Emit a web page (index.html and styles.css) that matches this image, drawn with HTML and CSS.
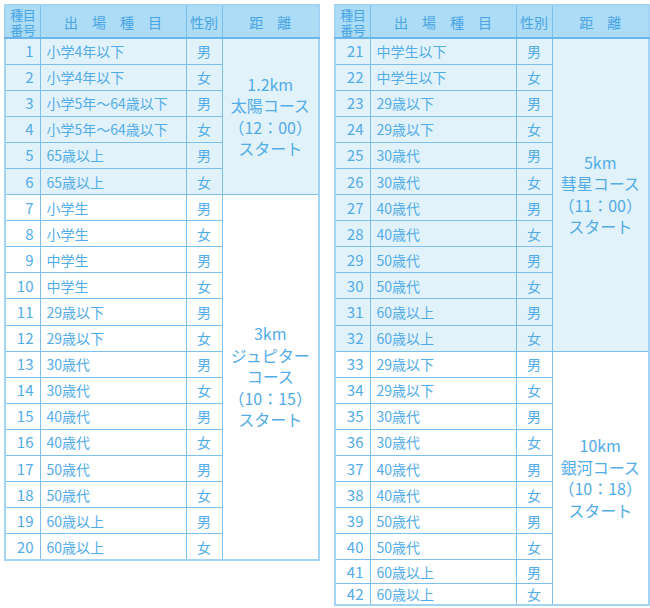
FILE: index.html
```html
<!DOCTYPE html>
<html lang="ja">
<head>
<meta charset="utf-8">
<link rel="stylesheet" href="styles.css">
</head>
<body>
<div class="wrap">
  <table class="tbl">
    <colgroup><col class="c-no"><col class="c-ev"><col class="c-sx"><col class="c-ds"></colgroup>
    <thead>
      <tr class="head"><th class="h-no">種目<br>番号</th><th>出　場　種　目</th><th>性別</th><th>距　離</th></tr>
    </thead>
    <tbody>
      <tr class="tint"><td class="no">1</td><td class="ev">小学4年以下</td><td class="sx">男</td><td class="ds" rowspan="6">1.2km<br>太陽コース<br>（12：00）<br>スタート</td></tr>
      <tr class="tint"><td class="no">2</td><td class="ev">小学4年以下</td><td class="sx">女</td></tr>
      <tr class="tint"><td class="no">3</td><td class="ev">小学5年～64歳以下</td><td class="sx">男</td></tr>
      <tr class="tint"><td class="no">4</td><td class="ev">小学5年～64歳以下</td><td class="sx">女</td></tr>
      <tr class="tint"><td class="no">5</td><td class="ev">65歳以上</td><td class="sx">男</td></tr>
      <tr class="tint"><td class="no">6</td><td class="ev">65歳以上</td><td class="sx">女</td></tr>
      <tr><td class="no">7</td><td class="ev">小学生</td><td class="sx">男</td><td class="ds" rowspan="14">3km<br>ジュピター<br>コース<br>（10：15）<br>スタート</td></tr>
      <tr><td class="no">8</td><td class="ev">小学生</td><td class="sx">女</td></tr>
      <tr><td class="no">9</td><td class="ev">中学生</td><td class="sx">男</td></tr>
      <tr><td class="no">10</td><td class="ev">中学生</td><td class="sx">女</td></tr>
      <tr><td class="no">11</td><td class="ev">29歳以下</td><td class="sx">男</td></tr>
      <tr><td class="no">12</td><td class="ev">29歳以下</td><td class="sx">女</td></tr>
      <tr><td class="no">13</td><td class="ev">30歳代</td><td class="sx">男</td></tr>
      <tr><td class="no">14</td><td class="ev">30歳代</td><td class="sx">女</td></tr>
      <tr><td class="no">15</td><td class="ev">40歳代</td><td class="sx">男</td></tr>
      <tr><td class="no">16</td><td class="ev">40歳代</td><td class="sx">女</td></tr>
      <tr><td class="no">17</td><td class="ev">50歳代</td><td class="sx">男</td></tr>
      <tr><td class="no">18</td><td class="ev">50歳代</td><td class="sx">女</td></tr>
      <tr><td class="no">19</td><td class="ev">60歳以上</td><td class="sx">男</td></tr>
      <tr><td class="no">20</td><td class="ev">60歳以上</td><td class="sx">女</td></tr>
    </tbody>
  </table>

  <table class="tbl">
    <colgroup><col class="c-no"><col class="c-ev"><col class="c-sx"><col class="c-ds"></colgroup>
    <thead>
      <tr class="head"><th class="h-no">種目<br>番号</th><th>出　場　種　目</th><th>性別</th><th>距　離</th></tr>
    </thead>
    <tbody>
      <tr class="tint"><td class="no">21</td><td class="ev">中学生以下</td><td class="sx">男</td><td class="ds" rowspan="12">5km<br>彗星コース<br>（11：00）<br>スタート</td></tr>
      <tr class="tint"><td class="no">22</td><td class="ev">中学生以下</td><td class="sx">女</td></tr>
      <tr class="tint"><td class="no">23</td><td class="ev">29歳以下</td><td class="sx">男</td></tr>
      <tr class="tint"><td class="no">24</td><td class="ev">29歳以下</td><td class="sx">女</td></tr>
      <tr class="tint"><td class="no">25</td><td class="ev">30歳代</td><td class="sx">男</td></tr>
      <tr class="tint"><td class="no">26</td><td class="ev">30歳代</td><td class="sx">女</td></tr>
      <tr class="tint"><td class="no">27</td><td class="ev">40歳代</td><td class="sx">男</td></tr>
      <tr class="tint"><td class="no">28</td><td class="ev">40歳代</td><td class="sx">女</td></tr>
      <tr class="tint"><td class="no">29</td><td class="ev">50歳代</td><td class="sx">男</td></tr>
      <tr class="tint"><td class="no">30</td><td class="ev">50歳代</td><td class="sx">女</td></tr>
      <tr class="tint"><td class="no">31</td><td class="ev">60歳以上</td><td class="sx">男</td></tr>
      <tr class="tint"><td class="no">32</td><td class="ev">60歳以上</td><td class="sx">女</td></tr>
      <tr><td class="no">33</td><td class="ev">29歳以下</td><td class="sx">男</td><td class="ds" rowspan="10">10km<br>銀河コース<br>（10：18）<br>スタート</td></tr>
      <tr><td class="no">34</td><td class="ev">29歳以下</td><td class="sx">女</td></tr>
      <tr><td class="no">35</td><td class="ev">30歳代</td><td class="sx">男</td></tr>
      <tr><td class="no">36</td><td class="ev">30歳代</td><td class="sx">女</td></tr>
      <tr><td class="no">37</td><td class="ev">40歳代</td><td class="sx">男</td></tr>
      <tr><td class="no">38</td><td class="ev">40歳代</td><td class="sx">女</td></tr>
      <tr><td class="no">39</td><td class="ev">50歳代</td><td class="sx">男</td></tr>
      <tr><td class="no">40</td><td class="ev">50歳代</td><td class="sx">女</td></tr>
      <tr class="short1"><td class="no">41</td><td class="ev">60歳以上</td><td class="sx">男</td></tr>
      <tr class="short2"><td class="no">42</td><td class="ev">60歳以上</td><td class="sx">女</td></tr>
    </tbody>
  </table>
</div>
</body>
</html>
```

FILE: styles.css
```css
html, body {
  margin: 0;
  padding: 0;
  background: #ffffff;
}
body {
  font-family: "Noto Sans CJK JP", "Noto Sans", sans-serif;
  color: #52ace8;
}
.wrap {
  display: flex;
  align-items: flex-start;
  gap: 14px;
  padding: 4px 0 0 4px;
}
.tbl {
  border-collapse: collapse;
  table-layout: fixed;
  width: 314px;
  border: 2px solid #a3d4f3;
}
.c-no { width: 35px; }
.c-ev { width: 146px; }
.c-sx { width: 36px; }
.c-ds { width: 97px; }

.tbl th, .tbl td {
  border: 1px solid #7cbfec;
  padding: 0;
  font-weight: 400;
  white-space: nowrap;
}
.head th {
  height: 31px;
  background: #acdcf6;
  color: #4aa4e2;
  font-size: 14px;
  line-height: 16px;
  text-align: center;
  border-bottom: 2px solid #6bb6ea;
}
.head .h-no {
  font-size: 13px;
  line-height: 15px;
  letter-spacing: -0.5px;
}
.tbl tbody tr {
  height: 26.1px;
}
.tbl tbody tr.short1 { height: 23.5px; }
.tbl tbody tr.short2 { height: 22px; }
.tint td {
  background: #e2f2fb;
}
.tbl td {
  font-size: 14px;
  line-height: 16px;
}
.no {
  text-align: right;
  padding-right: 6px !important;
  font-size: 15px !important;
}
.ev {
  text-align: left;
  padding-left: 6px !important;
}
.sx {
  text-align: center;
}
.ds {
  text-align: center;
  vertical-align: middle;
  font-size: 16px !important;
  line-height: 21.5px !important;
  background: #ffffff;
}
.tint .ds {
  background: #e2f2fb;
}
```
